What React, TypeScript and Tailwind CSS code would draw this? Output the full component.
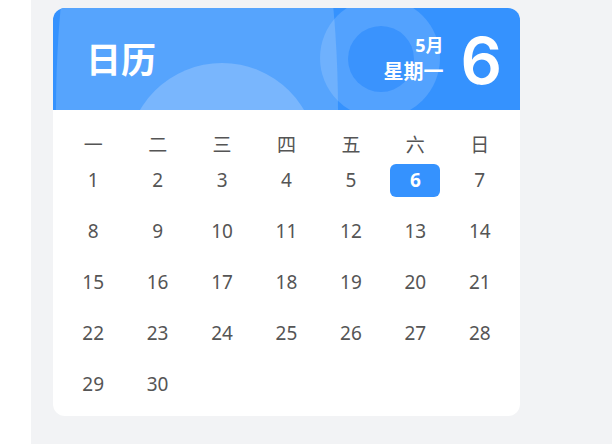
const weekdays = ["一", "二", "三", "四", "五", "六", "日"];
const days = Array.from({ length: 30 }, (_, i) => i + 1);
const today = 6;

const font = { fontFamily: '"Noto Sans", "Noto Sans CJK SC", sans-serif' };

export default function App() {
  return (
    <div className="flex w-[612px] h-[444px] overflow-hidden" style={font}>
      <div className="w-[31px] bg-white" />
      <div className="flex-1 bg-[#f2f3f5] pl-[22px] pt-[8px]">
        <div className="w-[467px] h-[408px] bg-white rounded-[12px] overflow-hidden flex flex-col">
          {/* header */}
          <div className="relative h-[102px] bg-[#3592fe] overflow-hidden flex items-center justify-between pl-[33px] pr-[18px]">
            <div className="absolute left-[3px] top-[-298px] w-[282px] h-[800px] rounded-[50%] bg-[#56a4fd]" />
            <div className="absolute left-[74px] top-[55px] w-[190px] h-[190px] rounded-full bg-[#79b6fd]" />
            <div className="absolute left-[267px] top-[-10px] w-[120px] h-[120px] rounded-full bg-white/15" />
            <div className="absolute left-[295px] top-[18px] w-[66px] h-[66px] rounded-full bg-[#3a93fd]" />
            <h1 className="relative text-white text-[35px] font-bold leading-none">日历</h1>
            <div className="relative flex items-center gap-[17px]">
              <div className="flex flex-col items-end text-white font-bold leading-none">
                <span className="text-[18px] mb-[8px]">5月</span>
                <span className="text-[20px]">星期一</span>
              </div>
              <span className="text-white text-[65px] font-semibold leading-none mt-[2px]" style={{ fontFamily: "Inter, sans-serif" }}>6</span>
            </div>
          </div>

          {/* body */}
          <div className="px-[8px] pt-[25px]">
            <div className="grid grid-cols-7 h-[20px] items-center">
              {weekdays.map((w) => (
                <div key={w} className="text-center text-[19px] leading-none text-[#555]">{w}</div>
              ))}
            </div>
            <div className="grid grid-cols-7">
              {days.map((d) => (
                <div key={d} className="h-[51px] flex items-center justify-center">
                  {d === today ? (
                    <span className="w-[50px] h-[33px] rounded-[6px] bg-[#3592fe] text-white font-bold text-[19px] flex items-center justify-center">{d}</span>
                  ) : (
                    <span className="text-[19px] text-[#555]">{d}</span>
                  )}
                </div>
              ))}
            </div>
          </div>
        </div>
      </div>
    </div>
  );
}
